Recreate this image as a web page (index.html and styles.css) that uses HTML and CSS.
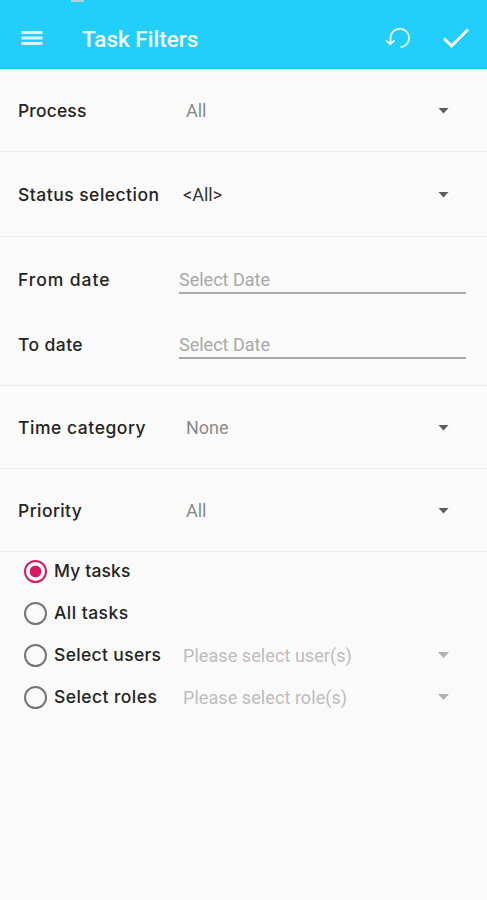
FILE: index.html
```html
<!DOCTYPE html>
<html lang="en">
<head>
<meta charset="utf-8">
<title>Task Filters</title>
<link rel="stylesheet" href="styles.css">
</head>
<body>
<header class="appbar">
  <span class="status-mark"></span>
  <svg class="menu" width="22" height="16" viewBox="0 0 22 16"><path d="M0.5 2.5h21M0.5 8h21M0.5 13.5h21"/></svg>
  <h1>Task Filters</h1>
  <svg class="undo" width="28" height="26" viewBox="0 0 28 26"><path d="M6.5 18V12.5A9.3 9.3 0 1 1 16.5 22.3M2 15.4L6.3 19.2L10.5 15.4"/></svg>
  <svg class="check" width="28" height="24" viewBox="0 0 28 24"><path d="M2 12.5L9.5 20L26 3.5"/></svg>
</header>
<main>
  <section class="row process">
    <span class="label">Process</span><span class="value">All</span><i class="caret"></i>
  </section>
  <section class="row status">
    <span class="label">Status selection</span><span class="value dark">&lt;All&gt;</span><i class="caret"></i>
  </section>
  <section class="dates">
    <div class="date"><span class="label from">From date</span><span class="field">Select Date</span></div>
    <div class="date"><span class="label to">To date</span><span class="field">Select Date</span></div>
  </section>
  <section class="row time">
    <span class="label">Time category</span><span class="value">None</span><i class="caret"></i>
  </section>
  <section class="row priority">
    <span class="label">Priority</span><span class="value">All</span><i class="caret"></i>
  </section>
  <section class="choices">
    <div class="choice"><i class="radio on"></i><span class="label my">My tasks</span></div>
    <div class="choice"><i class="radio"></i><span class="label all">All tasks</span></div>
    <div class="choice"><i class="radio"></i><span class="label users">Select users</span><span class="value faint">Please select user(s)</span><i class="caret light"></i></div>
    <div class="choice"><i class="radio"></i><span class="label roles">Select roles</span><span class="value faint">Please select role(s)</span><i class="caret light"></i></div>
  </section>
</main>
</body>
</html>
```
FILE: styles.css
```css
* { box-sizing: border-box; }
body {
  margin: 0;
  min-height: 900px;
  background: #fafafa;
  font-family: Roboto, sans-serif;
  font-size: 18px;
  color: #242424;
}
.appbar {
  position: relative;
  display: flex;
  align-items: center;
  height: 69px;
  padding: 8px 17px 0 21px;
  background: #22cefa;
  border-bottom: 1px solid #14bfea;
}
.status-mark {
  position: absolute;
  left: 71px;
  top: 0;
  width: 13px;
  height: 2px;
  background: #b5cfda;
}
.appbar svg { fill: none; stroke: #fff; }
.menu { stroke-width: 2.8; opacity: 0.82; }
h1 {
  flex: 1;
  margin: 0 0 0 39px;
  padding-top: 2px;
  font-size: 22.5px;
  line-height: 28px;
  font-weight: 500;
  color: #f2fdff;
}
.undo { stroke-width: 1.9; opacity: 0.85; margin-right: 30px; }
.check { stroke-width: 3; }
.row {
  display: grid;
  grid-template-columns: 168px 1fr 11px;
  align-items: center;
  padding: 1px 38px 0 18px;
  border-bottom: 1px solid #ededed;
}
.process { height: 83px; }
.status { height: 85px; }
.time, .priority { height: 83px; }
.label {
  font-family: Inter, sans-serif;
  font-weight: 500;
  font-size: 17.5px;
  line-height: 24px;
  white-space: nowrap;
}
.process .label, .my { letter-spacing: 0.14px; }
.status .label { letter-spacing: 0.48px; }
.from { letter-spacing: 0.95px; }
.to, .priority .label { letter-spacing: 0.42px; }
.time .label { letter-spacing: 0.54px; }
.all { letter-spacing: 0.45px; }
.users { letter-spacing: 0.33px; }
.roles { letter-spacing: 0.43px; }
.value { color: #8a8a8a; line-height: 24px; padding-top: 1px; }
.dark { color: #333; margin-left: -3px; }
.caret {
  width: 11px;
  height: 6px;
  background: #5c5c5c;
  clip-path: polygon(0 0, 100% 0, 50% 100%);
}
.dates { height: 149px; padding: 25px 21px 0 18px; border-bottom: 1px solid #ededed; }
.date {
  display: grid;
  grid-template-columns: 161px 1fr;
  height: 65px;
  align-items: start;
}
.date .label { padding-top: 6px; }
.field {
  height: 32px;
  padding-top: 6px;
  line-height: 24px;
  color: #a8a8a8;
  border-bottom: 2px solid #aaa;
}
.choices { display: grid; grid-auto-rows: 42px; margin-top: -2px; }
.choice {
  display: grid;
  grid-template-columns: 30px 129px 1fr 11px;
  align-items: center;
  padding: 0 38px 0 24px;
}
.radio {
  width: 23px;
  height: 23px;
  border: 2px solid #757575;
  border-radius: 50%;
}
.on {
  border-color: #d81b60;
  background: radial-gradient(circle, #d81b60 5.5px, transparent 6.2px);
}
.faint { color: #bdbdbd; padding-top: 2px; letter-spacing: 0.07px; }
.light { background: #b0b0b0; }
```
